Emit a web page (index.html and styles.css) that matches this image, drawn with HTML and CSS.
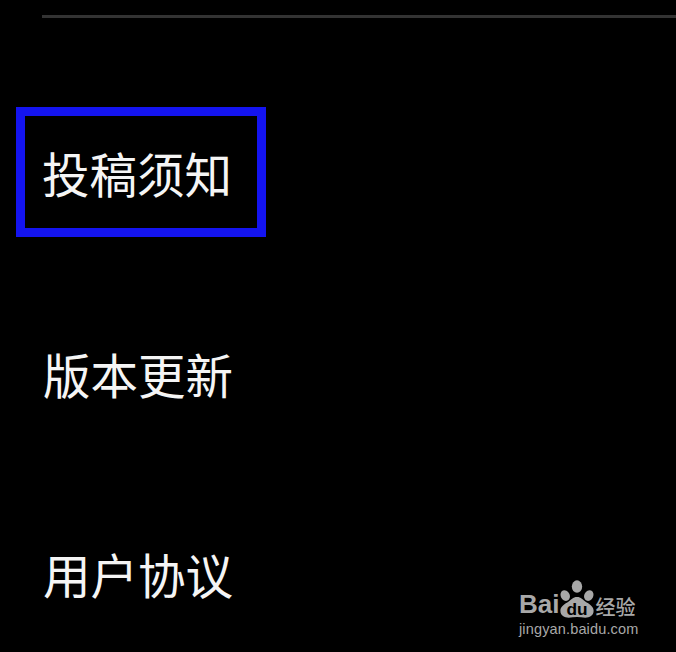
FILE: index.html
```html
<!DOCTYPE html>
<html lang="zh-CN">
<head>
    <meta charset="UTF-8">
    <title>设置</title>
    <link rel="stylesheet" href="styles.css">
</head>
<body>
    <div class="divider"></div>

    <ul class="menu">
        <li class="menu-item"><span class="highlight">投稿须知</span></li>
        <li class="menu-item">版本更新</li>
        <li class="menu-item">用户协议</li>
    </ul>

    <div class="watermark">
        <div class="logo-row">
            <span class="logo-bai">Bai</span>
            <svg class="paw" viewBox="0 0 52 54">
                <ellipse cx="9" cy="22" rx="6.5" ry="8" transform="rotate(-25 9 22)"/>
                <ellipse cx="26" cy="9" rx="7.5" ry="9"/>
                <ellipse cx="43" cy="22" rx="6.5" ry="8" transform="rotate(25 43 22)"/>
                <path d="M26 24c-6 0-8 4-14 8-6 3-10 7-10 12 0 7 6 10 12 10 4 0 8-1 12-1s8 1 12 1c6 0 12-3 12-10 0-5-4-9-10-12-6-4-8-8-14-8z"/>
                <text class="paw-text" x="26" y="50">du</text>
            </svg>
            <span class="logo-cn">经验</span>
        </div>
        <div class="logo-url">jingyan.baidu.com</div>
    </div>
</body>
</html>
```

FILE: styles.css
```css
html, body {
    margin: 0;
    padding: 0;
    height: 652px;
    overflow: hidden;
}
body {
    position: relative;
    background: #000;
    color: #f5f5f5;
    font-family: "Noto Sans CJK SC", "Liberation Sans", sans-serif;
}
.divider {
    height: 3px;
    margin: 15px 0 0 42px;
    background: #333;
}
.menu {
    list-style: none;
    margin: 54px 0 0;
    padding: 0;
}
.menu-item {
    height: 200px;
    padding-left: 43px;
    display: flex;
    align-items: center;
    font-size: 47.5px;
    line-height: 60px;
}
.menu-item:first-child {
    padding-left: 16px;
    margin-bottom: 2px;
}
.highlight {
    width: 232px;
    height: 112px;
    line-height: 114px;
    text-indent: 17px;
    border: 9px solid #1414f0;
    white-space: nowrap;
}
.watermark {
    position: absolute;
    left: 519px;
    top: 580px;
    color: #a8a8a8;
    font-family: "Liberation Sans", sans-serif;
}
.logo-row {
    display: flex;
    align-items: flex-end;
    height: 38px;
}
.logo-bai {
    font-size: 26px;
    font-weight: bold;
    line-height: 26px;
    margin-bottom: 1px;
}
.paw {
    width: 36px;
    height: 38px;
    fill: #a8a8a8;
}
.paw-text {
    fill: #000;
    font-size: 25px;
    font-weight: bold;
    text-anchor: middle;
}
.logo-cn {
    font-family: "Noto Sans CJK SC", sans-serif;
    font-size: 20px;
    font-weight: 500;
    line-height: 24px;
    margin-bottom: -1px;
}
.logo-url {
    font-size: 14.5px;
    line-height: 18px;
    letter-spacing: 0.15px;
    margin-top: 2px;
}
```
